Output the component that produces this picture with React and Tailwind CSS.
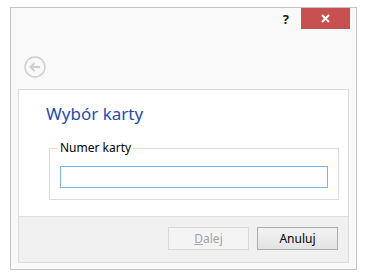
export default function App() {
  return (
    <div className="w-[367px] h-[277px] bg-white pt-[7px] pl-[10px] font-['Noto_Sans','Open_Sans',sans-serif]">
      <div className="w-[347px] h-[263px] border border-[#c4c4c4] bg-[#f9f9f9] flex flex-col">
        {/* title bar */}
        <div className="flex justify-end items-center h-[22px] pr-[6px]">
          <span className="mr-[12px] text-[13px] font-bold text-[#1a1a1a] leading-none">?</span>
          <div className="w-[49px] h-[21px] bg-[#c75050] flex items-center justify-center self-start">
            <svg width="9" height="9" viewBox="0 0 9 9">
              <path d="M1 1 L8 8 M8 1 L1 8" stroke="#fff" strokeWidth="2" />
            </svg>
          </div>
        </div>

        {/* back */}
        <div className="ml-[13px] mt-[26px] w-[22px] h-[22px]">
          <svg width="22" height="22" viewBox="0 0 22 22">
            <circle cx="11" cy="11" r="10" fill="none" stroke="#cfcfcf" strokeWidth="1.5" />
            <path d="M16 11 H6.5 M10.5 7 L6.5 11 L10.5 15" fill="none" stroke="#cfcfcf" strokeWidth="2" />
          </svg>
        </div>

        {/* page */}
        <div className="ml-[7px] mt-[11px] w-[331px] h-[174px] border border-[#dcdcdc] bg-white flex flex-col">
          <div className="flex-1">
            <div className="pl-[27px] pt-[12px] text-[17px] leading-[24px] text-[#1c4db0]">Wybór karty</div>
            <fieldset className="ml-[30px] mt-[15px] w-[290px] h-[59px] border border-[#dcdcdc] px-[10px] pt-[0px]">
              <legend className="ml-[-2px] px-[2px] text-[12px] leading-[14px] text-black">Numer karty</legend>
              <div className="mt-[11px] h-[22px] w-[268px] border border-[#7eb4ea] bg-white" />
            </fieldset>
          </div>
          <div className="h-[46px] border-t border-[#dfdfdf] bg-[#f0f0f0] flex justify-end items-start pt-[10px] pr-[10px] gap-[8px] text-[12px]">
            <div className="w-[81px] h-[23px] border border-[#d9d9d9] bg-[#f4f4f4] text-[#a3a3a3] flex items-center justify-center">
              <span><span className="underline">D</span>alej</span>
            </div>
            <div className="w-[81px] h-[23px] border border-[#acacac] bg-gradient-to-b from-[#f2f2f2] to-[#e3e3e3] text-black flex items-center justify-center">
              Anuluj
            </div>
          </div>
        </div>
      </div>
    </div>
  );
}
